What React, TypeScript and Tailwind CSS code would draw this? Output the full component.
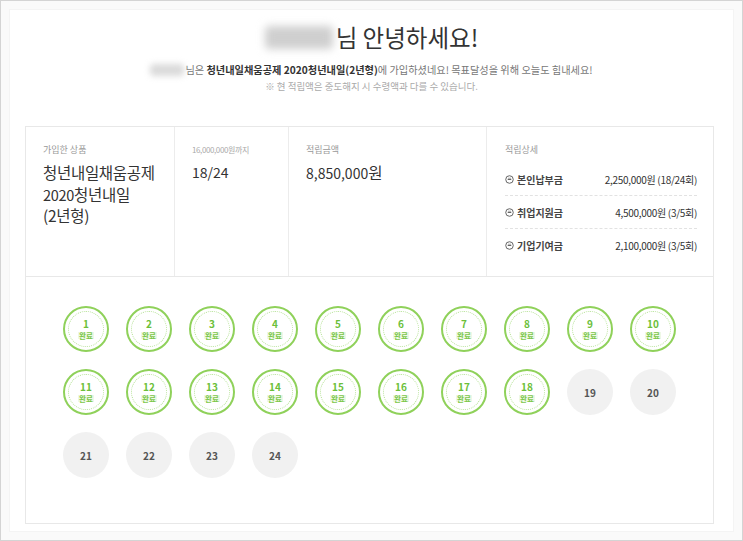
import React from "react";

const F = { fontFamily: '"Noto Sans CJK KR", "Noto Sans", sans-serif' };

function Done({ n }: { n: number }) {
  return (
    <div className="relative w-[46px] h-[46px] rounded-full border-2 border-[#8fd15a] bg-white flex items-center justify-center">
      <div className="absolute inset-[3px] rounded-full border border-dotted border-[#b8e39a]" />
      <div className="relative flex flex-col items-center leading-none">
        <span className="text-[10px] font-bold text-[#6cbf3a]">{n}</span>
        <span className="mt-[3px] text-[7.5px] font-bold text-[#7cc74b] bg-[#eef8e6] px-[1px]">완료</span>
      </div>
    </div>
  );
}

function Todo({ n }: { n: number }) {
  return (
    <div className="w-[46px] h-[46px] rounded-full bg-[#f1f1f1] flex items-center justify-center">
      <span className="text-[10px] font-bold text-[#555]">{n}</span>
    </div>
  );
}

function Minus() {
  return (
    <svg width="9" height="9" viewBox="0 0 10 10" className="mr-[3px]">
      <circle cx="5" cy="5" r="4.2" fill="none" stroke="#555" strokeWidth="1" />
      <path d="M3 5 L7 5" stroke="#555" strokeWidth="1" />
      <path d="M3.2 3.6 L6.8 3.6" stroke="#555" strokeWidth="0.6" />
    </svg>
  );
}

export default function App() {
  const rows = [
    ["본인납부금", "2,250,000원 (18/24회)"],
    ["취업지원금", "4,500,000원 (3/5회)"],
    ["기업기여금", "2,100,000원 (3/5회)"],
  ];
  return (
    <div style={F} className="w-[743px] h-[541px] border border-[#d4d4d4] bg-[#fafafa] p-[8px]">
      <div className="w-full h-full bg-white border border-[#f4f4f4] flex flex-col">
        <div className="mt-[12px] h-[30px] flex items-center justify-center">
          <span className="inline-block w-[68px] h-[23px] mr-[3px] rounded bg-[#cfcfcf] blur-[4px]" />
          <span className="text-[23.5px] text-[#333] leading-[30px]">님 안녕하세요!</span>
        </div>
        <div className="mt-[10px] h-[16px] flex items-center justify-center text-[10.2px] text-[#777] leading-[16px]">
          <span className="inline-block w-[34px] h-[12px] mr-[1px] rounded bg-[#dadada] blur-[3px]" />
          <span>
            님은 <b className="text-[#333]">청년내일채움공제 2020청년내일(2년형)</b>에 가입하셨네요! 목표달성을 위해 오늘도 힘내세요!
          </span>
        </div>
        <div className="h-[16px] text-center text-[9.5px] text-[#aaa] leading-[16px]">
          ※ 현 적립액은 중도해지 시 수령액과 다를 수 있습니다.
        </div>
        <div className="mt-[32px] ml-[15px] w-[689px] h-[398px] border border-[#e8e8e8] flex flex-col">
          <div className="h-[150px] flex border-b border-[#e8e8e8]">
            <div className="w-[149px] border-r border-[#ececec] pl-[17px] pt-[15px]">
              <div className="text-[9px] text-[#999] leading-[16px]">가입한 상품</div>
              <div className="mt-[4px] text-[15.5px] text-[#333] leading-[21.5px] tracking-[-0.3px]">
                청년내일채움공제
                <br />
                <span className="text-[14.5px]">2020</span>청년내일
                <br />
                (2년형)
              </div>
            </div>
            <div className="w-[114px] border-r border-[#ececec] pl-[17px] pt-[15px]">
              <div className="text-[8px] text-[#aaa] leading-[16px] tracking-[-0.4px]">16,000,000원까지</div>
              <div className="mt-[4px] text-[14px] text-[#333] leading-[21.5px]">18/24</div>
            </div>
            <div className="w-[198px] border-r border-[#ececec] pl-[17px] pt-[15px]">
              <div className="text-[9px] text-[#999] leading-[16px]">적립금액</div>
              <div className="mt-[4px] text-[14px] text-[#333] leading-[21.5px]">
                8,850,000<span className="text-[15.5px]">원</span>
              </div>
            </div>
            <div className="flex-1 pl-[18px] pr-[16px] pt-[15px]">
              <div className="text-[9px] text-[#999] leading-[16px]">적립상세</div>
              <div className="mt-[5px]">
                {rows.map(([a, b], i) => (
                  <div
                    key={a}
                    className={
                      "h-[33px] flex items-center justify-between " +
                      (i < 2 ? "border-b border-dashed border-[#e2e2e2]" : "")
                    }
                  >
                    <span className="flex items-center text-[10px] font-bold text-[#444]">
                      <Minus />
                      {a}
                    </span>
                    <span className="text-[10px] text-[#333] tracking-[-0.3px]">{b}</span>
                  </div>
                ))}
              </div>
            </div>
          </div>
          <div className="pt-[29px] pl-[37px] grid grid-cols-[repeat(10,46px)] gap-[17px]">
            {Array.from({ length: 24 }, (_, i) =>
              i < 18 ? <Done key={i} n={i + 1} /> : <Todo key={i} n={i + 1} />
            )}
          </div>
        </div>
      </div>
    </div>
  );
}
